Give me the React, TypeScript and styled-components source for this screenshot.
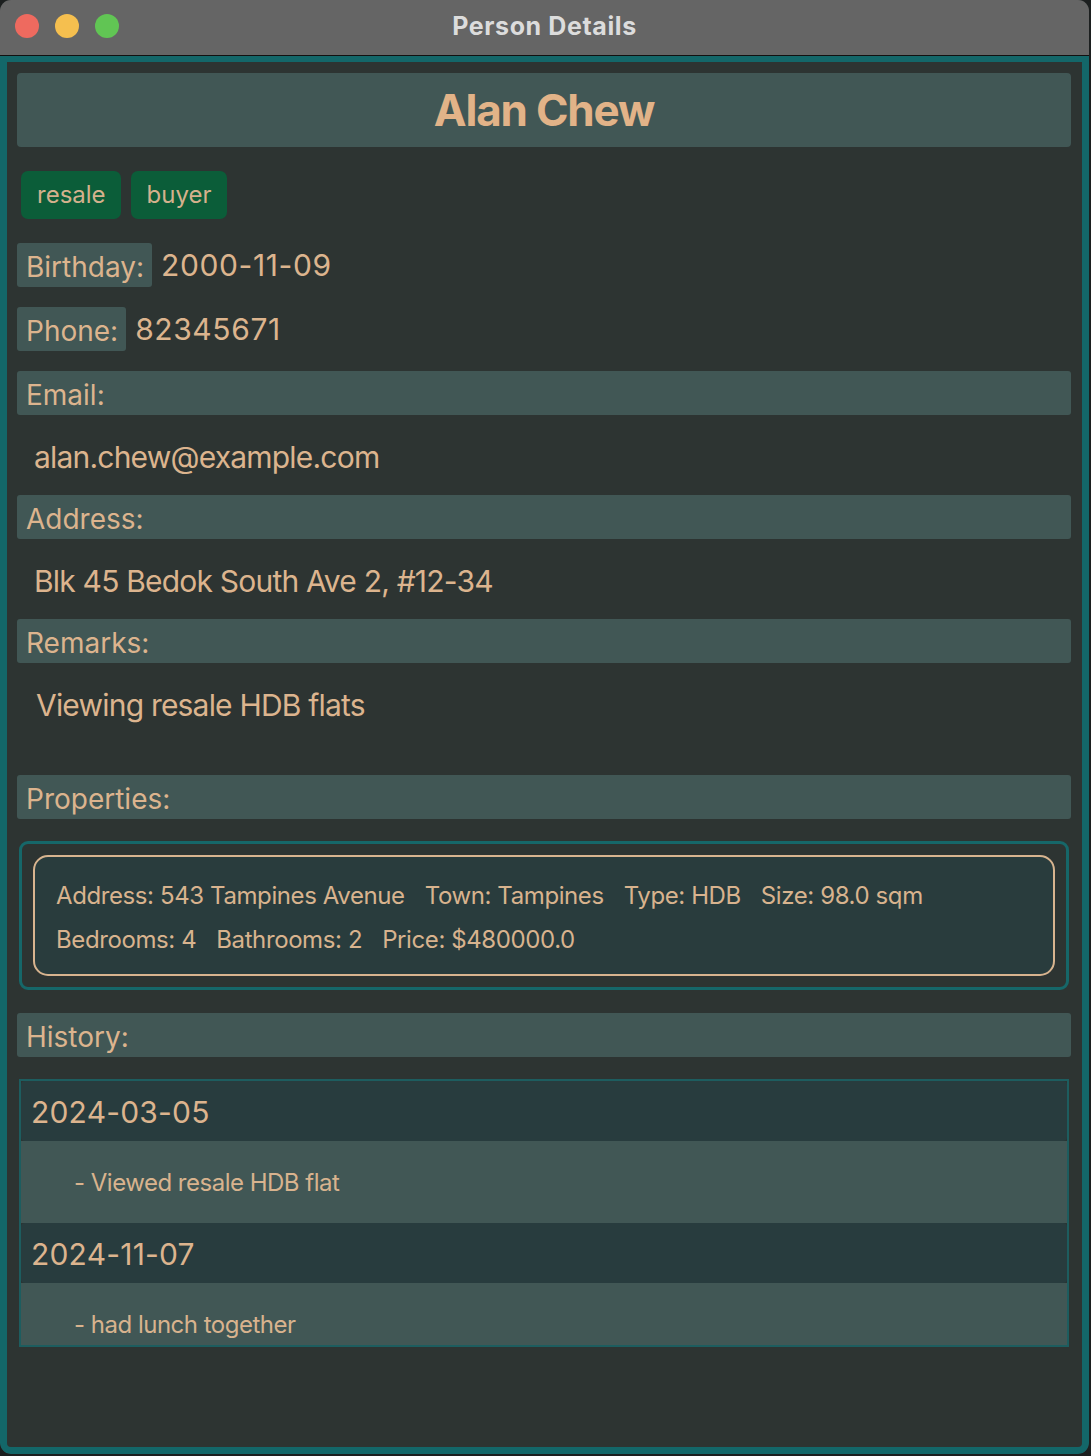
import React from 'react';
import styled, { createGlobalStyle } from 'styled-components';

const GlobalStyle = createGlobalStyle`
  html, body {
    margin: 0;
    padding: 0;
    background: #1c1f1f;
  }
  body {
    font-family: Inter, "Noto Sans", "Liberation Sans", sans-serif;
  }
  * {
    box-sizing: border-box;
  }
`;

const Window = styled.div`
  width: 1089px;
  height: 1454px;
  display: flex;
  flex-direction: column;
  border-radius: 11px;
  overflow: hidden;
  background: #2d3432;
`;

const TitleBar = styled.div`
  position: relative;
  height: 56px;
  flex-shrink: 0;
  background: #656565;
  border-bottom: 1px solid #111;
  display: flex;
  align-items: center;
  justify-content: center;
`;

const Lights = styled.div`
  position: absolute;
  left: 15px;
  top: 14px;
  display: flex;
  gap: 16px;
`;

const Light = styled.span<{ $color: string }>`
  width: 24px;
  height: 24px;
  border-radius: 50%;
  background: ${(p) => p.$color};
`;

const Title = styled.div`
  font-size: 25px;
  font-weight: 700;
  color: #dcdcdc;
  letter-spacing: 0.6px;
  padding-bottom: 3px;
`;

const Body = styled.div`
  flex: 1;
  display: flex;
  flex-direction: column;
  border: 7px solid #136769;
  border-top-width: 6px;
  border-bottom-left-radius: 11px;
  border-bottom-right-radius: 11px;
  padding: 11px 11px 0 10px;
  color: #dcb48e;
`;

const NameBar = styled.div`
  height: 74px;
  background: #415755;
  border-radius: 4px;
  display: flex;
  align-items: center;
  justify-content: center;
  font-size: 44px;
  font-weight: 700;
  letter-spacing: -1.2px;
  color: #e2b388;
`;

const TagRow = styled.div`
  margin-top: 24px;
  padding-left: 4px;
  display: flex;
  gap: 10px;
`;

const Tag = styled.span`
  height: 48px;
  padding: 0 15px 1px 16px;
  border-radius: 7px;
  background: #0b5d39;
  color: #d4b18d;
  font-size: 24px;
  display: flex;
  align-items: center;
`;

const InfoRow = styled.div<{ $top: number }>`
  margin-top: ${(p) => p.$top}px;
  display: flex;
  align-items: center;
  gap: 9px;
`;

const InlineLabel = styled.span`
  height: 44px;
  padding: 3px 8px 0 9px;
  background: #415755;
  border-radius: 3px;
  font-size: 28px;
  display: flex;
  align-items: center;
`;

const InlineValue = styled.span`
  font-size: 30px;
  letter-spacing: 0.6px;
  padding-bottom: 1px;
`;

const SectionHeader = styled.div<{ $top: number }>`
  margin-top: ${(p) => p.$top}px;
  height: 44px;
  background: #415755;
  border-radius: 3px;
  padding: 3px 0 0 9px;
  font-size: 28px;
  display: flex;
  align-items: center;
`;

const Value = styled.div<{ $height: number; $left: number }>`
  height: ${(p) => p.$height}px;
  padding-left: ${(p) => p.$left}px;
  padding-top: 24px;
  font-size: 30px;
  line-height: 36px;
  letter-spacing: -0.8px;
`;

const PropertyBox = styled.div`
  margin: 22px 2px 0 2px;
  border: 3px solid #166769;
  border-radius: 9px;
  padding: 11px;
`;

const PropertyCard = styled.div`
  border: 2px solid #d8b48f;
  border-radius: 15px;
  background: #293c3d;
  padding: 17px 21px 12px 21px;
  font-size: 24px;
  line-height: 44px;
  color: #d8b38e;
`;

const PropLine = styled.div`
  display: flex;
  gap: 20px;
  letter-spacing: -0.4px;
`;

const HistoryList = styled.div`
  margin: 22px 2px 0 2px;
  height: 268px;
  overflow: hidden;
  border: 2px solid #1d5d5f;
  display: flex;
  flex-direction: column;
`;

const DateBar = styled.div`
  height: 60px;
  flex-shrink: 0;
  background: #283c3e;
  border-radius: 4px;
  padding: 2px 0 0 10px;
  font-size: 30px;
  letter-spacing: 0.2px;
  display: flex;
  align-items: center;
`;

const Note = styled.div`
  height: 82px;
  flex-shrink: 0;
  background: #415755;
  padding: 1px 0 0 53px;
  font-size: 24px;
  display: flex;
  align-items: center;
  color: #d8b38e;
  letter-spacing: -0.5px;
`;

const history = [
  { date: '2024-03-05', note: '- Viewed resale HDB flat' },
  { date: '2024-11-07', note: '- had lunch together' },
];

export default function App() {
  return (
    <>
      <GlobalStyle />
      <Window>
        <TitleBar>
          <Lights>
            <Light $color="#ee6a5f" />
            <Light $color="#f5bf4f" />
            <Light $color="#61c554" />
          </Lights>
          <Title>Person Details</Title>
        </TitleBar>
        <Body>
          <NameBar>Alan Chew</NameBar>
          <TagRow>
            <Tag>resale</Tag>
            <Tag>buyer</Tag>
          </TagRow>
          <InfoRow $top={24}>
            <InlineLabel>Birthday:</InlineLabel>
            <InlineValue>2000-11-09</InlineValue>
          </InfoRow>
          <InfoRow $top={20}>
            <InlineLabel>Phone:</InlineLabel>
            <InlineValue>82345671</InlineValue>
          </InfoRow>

          <SectionHeader $top={20}>Email:</SectionHeader>
          <Value $height={80} $left={17}>alan.chew@example.com</Value>

          <SectionHeader $top={0}>Address:</SectionHeader>
          <Value $height={80} $left={17}>Blk 45 Bedok South Ave 2, #12-34</Value>

          <SectionHeader $top={0}>Remarks:</SectionHeader>
          <Value $height={112} $left={19}>Viewing resale HDB flats</Value>

          <SectionHeader $top={0}>Properties:</SectionHeader>
          <PropertyBox>
            <PropertyCard>
              <PropLine>
                <span>Address: 543 Tampines Avenue</span>
                <span>Town: Tampines</span>
                <span>Type: HDB</span>
                <span>Size: 98.0 sqm</span>
              </PropLine>
              <PropLine>
                <span>Bedrooms: 4</span>
                <span>Bathrooms: 2</span>
                <span>Price: $480000.0</span>
              </PropLine>
            </PropertyCard>
          </PropertyBox>

          <SectionHeader $top={23}>History:</SectionHeader>
          <HistoryList>
            {history.map((h) => (
              <React.Fragment key={h.date}>
                <DateBar>{h.date}</DateBar>
                <Note>{h.note}</Note>
              </React.Fragment>
            ))}
          </HistoryList>
        </Body>
      </Window>
    </>
  );
}
